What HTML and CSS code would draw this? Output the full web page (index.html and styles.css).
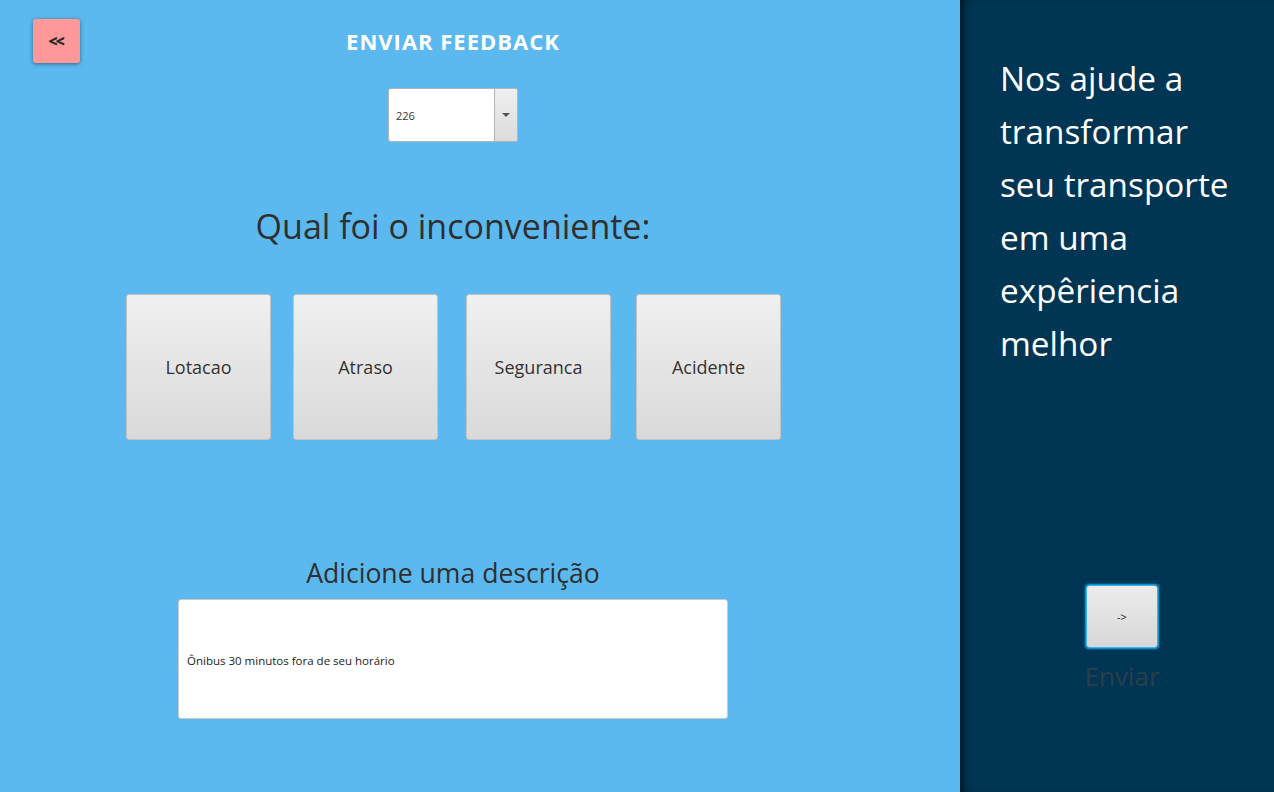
FILE: index.html
```html
<!DOCTYPE html>
<html lang="pt">
<head>
<meta charset="utf-8">
<title>Enviar Feedback</title>
<link rel="stylesheet" href="styles.css">
</head>
<body>
<div class="app">
  <main class="main">
    <header class="header">
      <button class="back-btn">&lt;&lt;</button>
      <h1 class="title">ENVIAR FEEDBACK</h1>
      <span></span>
    </header>
    <div class="combo">
      <span class="combo-value">226</span>
      <span class="combo-arrow"><svg width="8" height="4" viewBox="0 0 8 4"><path d="M0 0h8L4 4z" fill="#555"/></svg></span>
    </div>
    <h2 class="question">Qual foi o inconveniente:</h2>
    <div class="options">
      <button class="opt opt-1">Lotacao</button>
      <button class="opt opt-2">Atraso</button>
      <button class="opt opt-3">Seguranca</button>
      <button class="opt opt-4">Acidente</button>
    </div>
    <h3 class="desc-label">Adicione uma descrição</h3>
    <div class="desc-box"><span class="desc-text">Ônibus 30 minutos fora de seu horário</span></div>
  </main>
  <aside class="side">
    <p class="slogan">Nos ajude a transformar seu transporte em uma expêriencia melhor</p>
    <div class="send">
      <button class="send-btn">-&gt;</button>
      <span class="send-label">Enviar</span>
    </div>
  </aside>
</div>
</body>
</html>
```
FILE: styles.css
```css
* { box-sizing: border-box; }
html, body { margin: 0; padding: 0; }
body {
  width: 1274px;
  height: 792px;
  overflow: hidden;
  font-family: "Open Sans", "Noto Sans", sans-serif;
}
.app {
  display: flex;
  height: 792px;
}
.main {
  width: 960px;
  background: #5cb9ef;
  padding: 19px 54px 0 0;
  display: flex;
  flex-direction: column;
  align-items: center;
}
.header {
  width: 100%;
  display: grid;
  grid-template-columns: 1fr auto 1fr;
  align-items: center;
  height: 44px;
}
.back-btn {
  justify-self: start;
  margin-left: 33px;
  width: 47px;
  height: 44px;
  border: none;
  border-radius: 3px;
  background: #ff9999;
  box-shadow: 0 1px 4px rgba(0, 0, 0, 0.45);
  font-family: inherit;
  font-weight: 800;
  font-size: 16px;
  letter-spacing: -2px;
  color: #2a2a2a;
  padding: 0 2px 0 0;
}
.title {
  margin: 0;
  font-size: 22px;
  font-weight: 700;
  color: #ffffff;
  letter-spacing: 1px;
  line-height: 42px;
}
.combo {
  margin-top: 25px;
  width: 130px;
  height: 54px;
  display: flex;
  background: #fff;
  border: 1px solid #b5b5b5;
  border-radius: 3px;
  overflow: hidden;
}
.combo-value {
  flex: 1;
  display: flex;
  align-items: center;
  padding-left: 7px;
  font-size: 11px;
  color: #333;
}
.combo-arrow {
  width: 23px;
  border-left: 1px solid #b5b5b5;
  background: linear-gradient(#efefef, #dcdcdc);
  display: flex;
  align-items: center;
  justify-content: center;
}
.question {
  margin: 57px 0 0;
  font-size: 34px;
  font-weight: 400;
  line-height: 54px;
  color: #2f2f2f;
}
.options {
  margin-top: 41px;
  display: flex;
  align-items: flex-start;
  padding-left: 1px;
}
.opt {
  width: 145px;
  height: 146px;
  border: 1px solid #c2c2c2;
  border-radius: 3px;
  background: linear-gradient(#f0f0f0, #d9d9d9);
  font-family: inherit;
  font-size: 18px;
  color: #333;
  padding: 0;
}
.opt-2 { margin-left: 22px; }
.opt-3 { margin-left: 28px; }
.opt-4 { margin-left: 25px; }
.desc-label {
  margin: 113px 0 0;
  font-size: 26.6px;
  font-weight: 400;
  line-height: 40px;
  color: #2f2f2f;
}
.desc-box {
  margin-top: 6px;
  width: 550px;
  height: 120px;
  background: #fff;
  border: 1px solid #c8c8c8;
  border-radius: 3px;
  display: flex;
  align-items: center;
  padding: 2px 8px 0;
}
.desc-text {
  font-size: 11.5px;
  color: #222;
}
.side {
  width: 314px;
  background: #003654;
  box-shadow: inset 8px 0 8px -4px rgba(0, 0, 0, 0.55);
  padding: 52px 30px 0 40px;
  display: flex;
  flex-direction: column;
}
.slogan {
  margin: 0;
  font-size: 33.3px;
  line-height: 53px;
  color: #ffffff;
}
.send {
  margin-top: 215px;
  margin-left: 86px;
  width: 72px;
  display: flex;
  flex-direction: column;
  align-items: center;
}
.send-btn {
  width: 72px;
  height: 63px;
  border: 1px solid #35b4ef;
  border-radius: 3px;
  background: linear-gradient(#ececec, #d7d7d7);
  box-shadow: 0 0 2px 1px #1ea8ea;
  font-family: inherit;
  font-size: 11px;
  color: #222;
  padding: 0;
}
.send-label {
  margin-top: 11px;
  font-size: 26px;
  line-height: 34px;
  color: #2b3e4b;
  white-space: nowrap;
}
```
